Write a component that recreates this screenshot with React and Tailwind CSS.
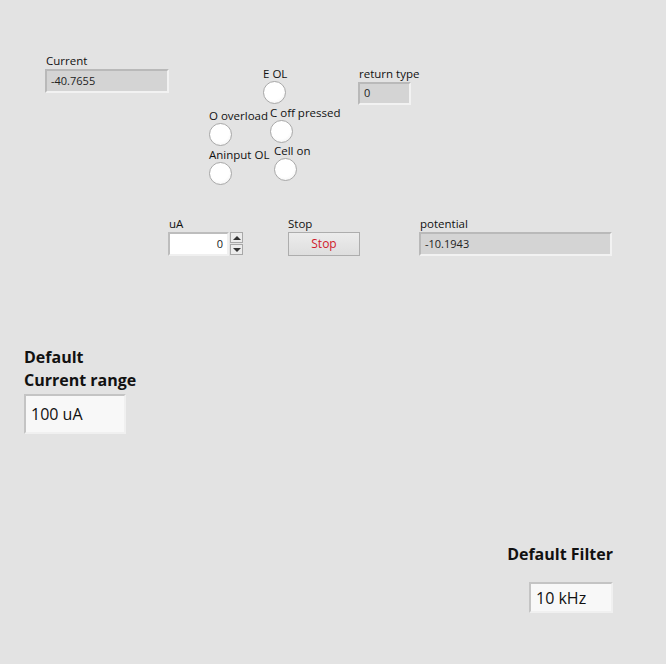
import React from 'react';

const font = { fontFamily: '"Open Sans", "Noto Sans", sans-serif' };

function Label({ children, className = '' }) {
  return <div className={`h-[14px] whitespace-nowrap text-[11.5px] leading-none text-[#111] ${className}`}>{children}</div>;
}

function Indicator({ value, className = '' }) {
  return (
    <div
      className={`flex items-center border-2 border-t-[#b9b9b9] border-l-[#b9b9b9] border-b-[#f2f2f2] border-r-[#f2f2f2] bg-[#d4d4d4] pl-1 text-[11px] text-[#222] ${className}`}
    >
      {value}
    </div>
  );
}

function Led({ label, className = '' }) {
  return (
    <div className={`flex flex-col items-start ${className}`}>
      <div className="h-[13px] whitespace-nowrap text-[11.5px] leading-none text-[#111]">{label}</div>
      <div className="h-[23px] w-[23px] rounded-full border border-[#a9a9a9] bg-[radial-gradient(circle_at_45%_40%,#ffffff_55%,#ececec_100%)]" />
    </div>
  );
}

function Spinner() {
  return (
    <div className="ml-px flex flex-col gap-px">
      <div className="flex h-[11px] w-[13px] items-center justify-center border border-[#a8a8a8] bg-[#ececec]">
        <div className="h-0 w-0 border-x-[4px] border-b-[4px] border-x-transparent border-b-[#333]" />
      </div>
      <div className="flex h-[11px] w-[13px] items-center justify-center border border-[#a8a8a8] bg-[#ececec]">
        <div className="h-0 w-0 border-x-[4px] border-t-[4px] border-x-transparent border-t-[#333]" />
      </div>
    </div>
  );
}

export default function App() {
  return (
    <div className="flex h-[664px] w-[666px] flex-col overflow-hidden bg-[#e3e3e3] pt-[55px]" style={font}>
      {/* Top row: Current, LED cluster, return type */}
      <div className="flex items-start pl-[45px]">
        <div className="flex w-[124px] flex-col">
          <Label className="pl-px">Current</Label>
          <Indicator value="-40.7655" className="h-[24px] w-[124px]" />
        </div>

        <div className="ml-[40px] mt-[13px] flex items-start">
          <div className="mt-[42px] flex w-[54px] flex-col gap-[3px]">
            <Led label="O overload" />
            <Led label="Aninput OL" />
          </div>
          <div className="flex w-[95px] flex-col gap-[3px]">
            <Led label="E OL" />
            <Led label="C off pressed" className="ml-[7px]" />
            <Led label="Cell on" className="-mt-px ml-[11px]" />
          </div>
        </div>

        <div className="mt-[13px] flex flex-col">
          <Label className="pl-px">return type</Label>
          <Indicator value="0" className="h-[23px] w-[53px]" />
        </div>
      </div>

      {/* Second row: uA, Stop, potential */}
      <div className="mt-[33px] flex items-start pl-[168px]">
        <div className="flex flex-col">
          <Label className="pl-px">uA</Label>
          <div className="flex items-start">
            <div className="flex h-[24px] w-[61px] items-center justify-end border-2 border-t-[#bdbdbd] border-l-[#bdbdbd] border-b-[#f0f0f0] border-r-[#f0f0f0] bg-white pr-1 text-[11px] text-[#222]">
              0
            </div>
            <Spinner />
          </div>
        </div>

        <div className="ml-[45px] flex flex-col">
          <Label>Stop</Label>
          <div className="flex h-[24px] w-[72px] items-center justify-center border border-[#adadad] bg-[linear-gradient(#ececec,#dedede)] text-[12px] text-[#d01a2a]">
            Stop
          </div>
        </div>

        <div className="ml-[59px] flex flex-col">
          <Label className="pl-px">potential</Label>
          <Indicator value="-10.1943" className="h-[24px] w-[193px]" />
        </div>
      </div>

      {/* Default Current range */}
      <div className="mt-[90px] flex flex-col items-start pl-[24px]">
        <div className="text-[16px] font-bold leading-[23px] text-[#111]">
          <div>Default</div>
          <div>Current range</div>
        </div>
        <div className="mt-[2px] flex h-[40px] w-[102px] items-center border-2 border-t-[#c4c4c4] border-l-[#c4c4c4] border-b-[#f0f0f0] border-r-[#f0f0f0] bg-[#f8f8f8] pl-[5px] text-[16px] text-[#111]">
          100 uA
        </div>
      </div>

      {/* Default Filter */}
      <div className="mt-[112px] flex flex-col items-end pr-[53px]">
        <div className="whitespace-nowrap text-[16px] font-bold leading-none text-[#111]">Default Filter</div>
        <div className="mt-[20px] flex h-[31px] w-[84px] items-center border-2 border-t-[#c4c4c4] border-l-[#c4c4c4] border-b-[#f0f0f0] border-r-[#f0f0f0] bg-[#f8f8f8] pl-[5px] text-[16px] text-[#111]">
          10 kHz
        </div>
      </div>
    </div>
  );
}
